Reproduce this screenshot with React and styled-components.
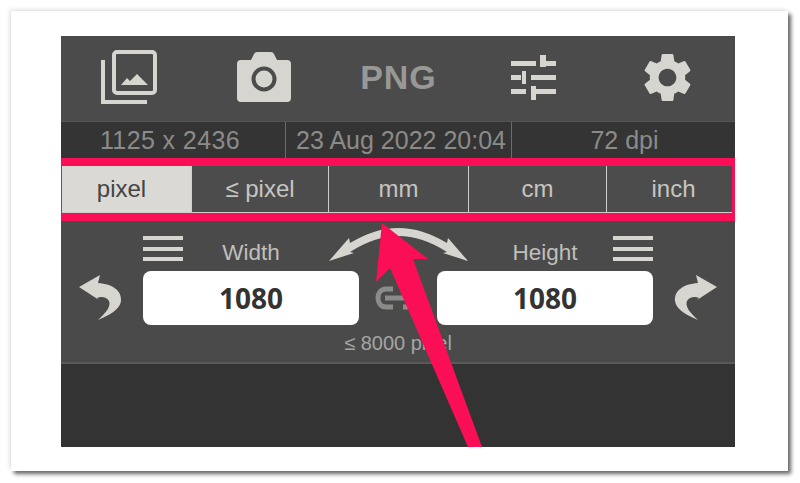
import React from "react";
import styled, { createGlobalStyle } from "styled-components";
import { MdSettings } from "react-icons/md";

const LIGHT = "#d6d5d0";
const PINK = "#fa0f57";

const Global = createGlobalStyle`
  html, body { margin: 0; padding: 0; background: #fff; }
  body { font-family: "Liberation Sans", Arial, sans-serif; }
`;

const Page = styled.div`
  width: 800px;
  height: 483px;
  box-sizing: border-box;
  padding: 11px 12px 12px 11px;
  overflow: hidden;
`;

const Card = styled.div`
  height: 100%;
  box-sizing: border-box;
  padding: 25px 53px 24px 50px;
  background: #fff;
  box-shadow: 3px 3px 4px #666, -2px -2px 4px #e8e8e8;
`;

const Shell = styled.div`
  position: relative;
  height: 411px;
  display: flex;
  flex-direction: column;
  background: #333;
  overflow: hidden;
`;

const Toolbar = styled.div`
  height: 85px;
  box-sizing: border-box;
  padding: 0 0 3px 1px;
  display: grid;
  grid-template-columns: repeat(5, 1fr);
  align-items: center;
  justify-items: center;
  background: #4b4b4b;
`;

const Format = styled.span`
  font-size: 34px;
  font-weight: 700;
  letter-spacing: 1px;
  color: #989896;
`;

const InfoBar = styled.div`
  height: 36px;
  display: grid;
  grid-template-columns: 224px 226px 1fr;
  background: #343434;
  border-top: 1px solid #555;
`;

const InfoCell = styled.div`
  display: flex;
  align-items: center;
  justify-content: center;
  box-sizing: border-box;
  padding: 0 ${p => p.$pr || 0}px 0 ${p => p.$pl || 0}px;
  font-size: 25px;
  letter-spacing: ${p => p.$spacing || 0}px;
  color: #8b8b89;
  white-space: nowrap;
  border-left: ${p => (p.$first ? "none" : "1px solid #6c6c6a")};
`;

const SegmentFrame = styled.div`
  height: 47px;
  display: flex;
  border-style: solid;
  border-color: ${PINK};
  border-width: 8px 3px 8px 1px;
`;

const Segment = styled.div`
  width: ${p => p.$w}px;
  flex: none;
  box-sizing: border-box;
  display: flex;
  align-items: center;
  justify-content: center;
  padding: 0 ${p => p.$pr || 0}px 0 ${p => p.$pl || 0}px;
  font-size: 24px;
  color: ${p => (p.$active ? "#444" : "#c6c5c1")};
  background: ${p => (p.$active ? "#dad9d4" : "#4c4c4c")};
  border-bottom: 1px solid #cfcecb;
  border-left: ${p => (p.$first ? "none" : "1px solid #cfcecb")};
`;

const Panel = styled.div`
  height: 141px;
  display: grid;
  grid-template-columns: 82px 216px 78px 216px 82px;
  grid-template-rows: 50px 54px 37px;
  background: #4a4a4a;
  border-bottom: 2px solid #595959;
`;

const Side = styled.div`
  grid-row: 2;
  grid-column: ${p => p.$col};
  display: flex;
  align-items: center;
  justify-content: center;
`;

const FieldHead = styled.div`
  grid-row: 1;
  grid-column: ${p => p.$col};
  display: grid;
  grid-template-columns: 40px 1fr 40px;
  align-items: end;
  padding-bottom: 5px;
`;

const Label = styled.span`
  grid-column: 2;
  grid-row: 1;
  text-align: center;
  font-size: 22.5px;
  line-height: 26px;
  color: #c0bfbb;
`;

const Burger = styled.div`
  grid-column: ${p => p.$col};
  grid-row: 1;
  margin-bottom: 5px;
  height: 25px;
  display: flex;
  flex-direction: column;
  justify-content: space-between;
  & > i {
    display: block;
    height: 4px;
    background: ${LIGHT};
  }
`;

const Input = styled.div`
  grid-row: 2;
  grid-column: ${p => p.$col};
  border-radius: 8px;
  background: #fff;
  display: flex;
  align-items: center;
  justify-content: center;
  font-family: "Open Sans", sans-serif;
  font-size: 28px;
  font-weight: 700;
  color: #333;
`;

const Link = styled.div`
  grid-row: 2;
  grid-column: 3;
  display: flex;
  align-items: center;
  justify-content: center;
`;

const Caption = styled.div`
  grid-row: 3;
  grid-column: 1 / -1;
  text-align: center;
  font-size: 20px;
  line-height: 36px;
  color: #a5a5a2;
`;

const Overlay = styled.svg`
  position: absolute;
  inset: 0;
  pointer-events: none;
`;

const BackSvg = styled.svg`
  transform: ${p => (p.$flip ? "scaleX(-1)" : "none")};
  margin: ${p => (p.$flip ? "0 0 0 2px" : "0 2px 0 0")};
`;

const Gallery = () => (
  <svg width="56" height="56" viewBox="0 0 56 56" fill="none">
    <path d="M2 11V53H46" stroke={LIGHT} strokeWidth="4" />
    <rect x="13" y="3" width="41" height="41" rx="3" stroke={LIGHT} strokeWidth="4" />
    <path d="M20 36L26 29L29 32L36 25L47 36Z" fill={LIGHT} />
  </svg>
);

const Camera = () => (
  <svg width="54" height="50" viewBox="0 0 54 50">
    <path
      d="M4 8H14L17 2Q18 0 20 0H34Q36 0 37 2L40 8H50Q54 8 54 12V46Q54 50 50 50H4Q0 50 0 46V12Q0 8 4 8Z"
      fill={LIGHT}
    />
    <circle cx="27" cy="27" r="10.5" fill="none" stroke="#4b4b4b" strokeWidth="4" />
  </svg>
);

const Sliders = () => (
  <svg width="45" height="45" viewBox="0 0 45 45" fill={LIGHT}>
    <rect x="0" y="6" width="25" height="5" />
    <rect x="29" y="0" width="6" height="12" />
    <rect x="29" y="6" width="16" height="5" />
    <rect x="0" y="20" width="10" height="5" />
    <rect x="11" y="16" width="4" height="13" />
    <rect x="20" y="20" width="25" height="5" />
    <rect x="0" y="34" width="15" height="5" />
    <rect x="20" y="31" width="5" height="14" />
    <rect x="20" y="34" width="25" height="5" />
  </svg>
);

const CurvedBack = ({ flip }) => (
  <BackSvg $flip={flip} width="44" height="46" viewBox="0 0 44 46">
    <path
      d="M0 12L21 0L19 8C34 9 43 16 42 26C41 34 31 40 19 45C28 37 32 31 30 26C28 22 22 21 18 23L20 25Z"
      fill={LIGHT}
    />
  </BackSvg>
);

const LinkIcon = () => (
  <svg width="46" height="24" viewBox="0 0 46 24" fill="none" stroke="#8b8b89" strokeWidth="5">
    <path d="M18 3H11C6 3 3 7 3 12C3 17 6 21 11 21H18" />
    <path d="M10 12H36" />
    <path d="M28 3H35C40 3 43 7 43 12C43 17 40 21 35 21H28" />
  </svg>
);

const segments = [
  { t: "pixel", w: 129, active: true, pr: 10 },
  { t: "≤ pixel", w: 137 },
  { t: "mm", w: 140 },
  { t: "cm", w: 138 },
  { t: "inch", w: 126, pl: 8 },
];

export default function App() {
  return (
    <Page>
      <Global />
      <Card>
        <Shell>
          <Toolbar>
            <Gallery />
            <Camera />
            <Format>PNG</Format>
            <Sliders />
            <MdSettings size={59} color={LIGHT} />
          </Toolbar>
          <InfoBar>
            <InfoCell $first $pr={6} $spacing={0.4}>1125 x 2436</InfoCell>
            <InfoCell $pl={5}>23 Aug 2022 20:04</InfoCell>
            <InfoCell $pl={2}>72 dpi</InfoCell>
          </InfoBar>
          <SegmentFrame>
            {segments.map((s, i) => (
              <Segment key={s.t} $w={s.w} $active={s.active} $first={i === 0} $pr={s.pr} $pl={s.pl}>
                {s.t}
              </Segment>
            ))}
          </SegmentFrame>
          <Panel>
            <FieldHead $col={2}>
              <Burger $col={1}>
                <i />
                <i />
                <i />
              </Burger>
              <Label>Width</Label>
            </FieldHead>
            <FieldHead $col={4}>
              <Label>Height</Label>
              <Burger $col={3}>
                <i />
                <i />
                <i />
              </Burger>
            </FieldHead>
            <Side $col={1}>
              <CurvedBack />
            </Side>
            <Input $col={2}>1080</Input>
            <Link>
              <LinkIcon />
            </Link>
            <Input $col={4}>1080</Input>
            <Side $col={5}>
              <CurvedBack flip />
            </Side>
            <Caption>≤ 8000 pixel</Caption>
          </Panel>
          <Overlay width="674" height="411" viewBox="61 36 674 411">
            <path
              d="M329 261L349 238L350 243Q375 228 398.5 228Q422 228 447 243L448 238L468 261L443 253L447 252Q422 236 398.5 236Q375 236 350 252L354 253Z"
              fill={LIGHT}
            />
            <path
              d="M382 223L428 259L413 259L482 447L468 447L390 268L376 282Z"
              fill={PINK}
            />
          </Overlay>
        </Shell>
      </Card>
    </Page>
  );
}
